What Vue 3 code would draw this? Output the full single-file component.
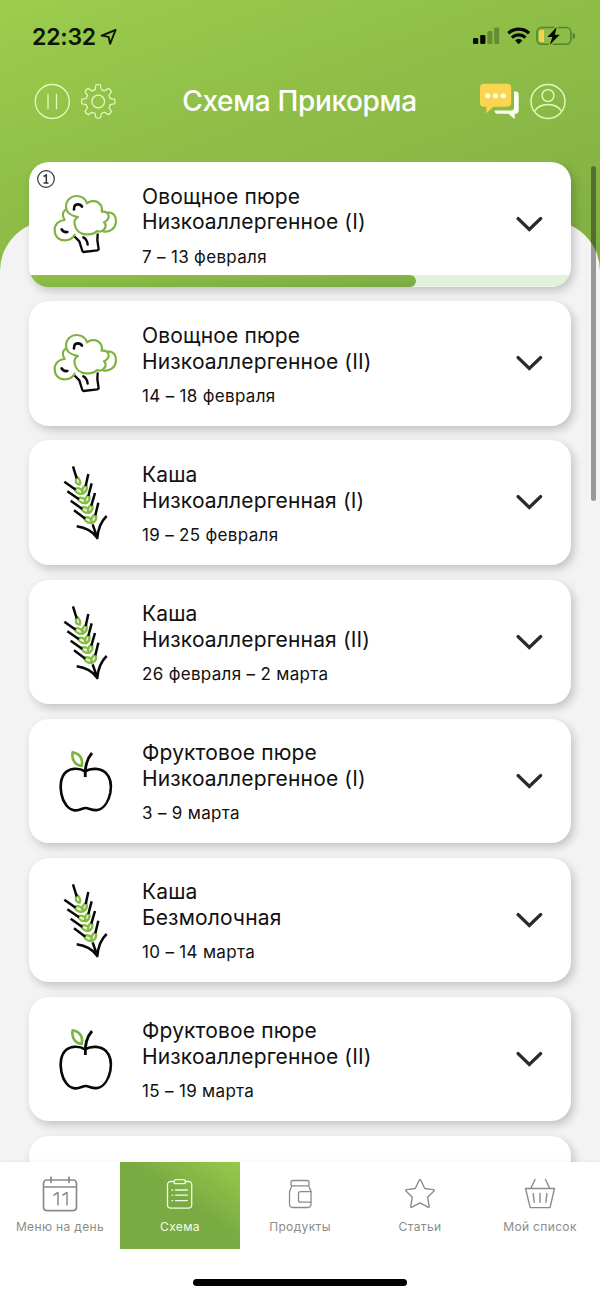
<script setup>
const cards = [
  { icon: 'broccoli', title: 'Овощное пюре', sub: 'Низкоаллергенное (I)', date: '7 – 13 февраля', progress: 71.4, info: true },
  { icon: 'broccoli', title: 'Овощное пюре', sub: 'Низкоаллергенное (II)', date: '14 – 18 февраля' },
  { icon: 'wheat', title: 'Каша', sub: 'Низкоаллергенная (I)', date: '19 – 25 февраля' },
  { icon: 'wheat', title: 'Каша', sub: 'Низкоаллергенная (II)', date: '26 февраля – 2 марта' },
  { icon: 'apple', title: 'Фруктовое пюре', sub: 'Низкоаллергенное (I)', date: '3 – 9 марта' },
  { icon: 'wheat', title: 'Каша', sub: 'Безмолочная', date: '10 – 14 марта' },
  { icon: 'apple', title: 'Фруктовое пюре', sub: 'Низкоаллергенное (II)', date: '15 – 19 марта' },
  { icon: '', title: 'Овощное пюре', sub: '', date: '' },
]
const tabs = [
  { id: 'calendar', label: 'Меню на день' },
  { id: 'plan', label: 'Схема', active: true },
  { id: 'jar', label: 'Продукты' },
  { id: 'star', label: 'Статьи' },
  { id: 'basket', label: 'Мой список' },
]
</script>

<template>
  <div class="screen">
    <div class="sheet"></div>
    <header class="head">
      <div class="status">
        <div class="clock">
          <span class="time">22:32</span>
          <svg class="loc" width="18" height="18" viewBox="0 0 18 18"><path d="M15.6 2 1.6 7.6l7 1.3 1.5 6.9z" fill="none" stroke="#0c1404" stroke-width="1.9" stroke-linejoin="round" /></svg>
        </div>
        <svg class="signals" width="104" height="22" viewBox="0 0 104 22">
          <g fill="#050a02">
            <rect x="1" y="12" width="5.2" height="6" rx="1.2" />
            <rect x="8.2" y="9" width="5.2" height="9" rx="1.2" />
            <rect x="15.4" y="5" width="5" height="13" rx="1.2" opacity=".28" />
            <rect x="22.2" y="1.5" width="5" height="16.5" rx="1.2" opacity=".28" />
          </g>
          <g fill="none" stroke="#050a02" stroke-width="3.3">
            <path d="M36.3 7.2a15.5 15.5 0 0 1 20.800 0" />
            <path d="M39.9 11.6a10 10 0 0 1 13.600 0" />
          </g>
          <path d="M43 14.5a5.600 5.600 0 0 1 7.400 0L46.700 18.300z" fill="#050a02" />
          <rect x="64.900" y="1.600" width="34" height="16.600" rx="4.600" fill="none" stroke="#55822b" stroke-width="1.500" />
          <path d="M100.600 7v6c2-.4 2.500-1.500 2.500-3s-.5-2.600-2.500-3z" fill="#55822b" />
          <path d="M67 6.500a2.500 2.500 0 0 1 2.500-2.500H72v12h-2.500a2.500 2.500 0 0 1-2.500-2.500z" fill="#f8d34a" />
          <path d="M84.800 1 75.300 11h5l-2.600 8L87.800 8.800h-5z" fill="#050a02" stroke="#90c048" stroke-width="3" paint-order="stroke" />
        </svg>
      </div>
      <div class="nav">
        <svg class="left-icons" width="84" height="38" viewBox="0 0 84 38" fill="none" stroke="#e8fac0" stroke-width="1.300">
          <circle cx="19.300" cy="19.500" r="17" />
          <path d="M15 12.500v14M23.500 12.500v14" stroke-linecap="round" />
          <circle cx="65.200" cy="19.500" r="6.300" />
          <path stroke-linejoin="round" transform="translate(65.200 19.500) scale(.93) translate(-65.200 -19.500)" d="M62.800 1.500h4.800q.6 5 1 5.200l3.300 1.400q2.500-1.700 4-2.700 2 .5 3.500 3.500-1 2.500-2.600 4l1.400 3.300q2.500.5 4.700.9 1 2.400 0 4.800l-4.700.9-1.400 3.400q1.500 2 2.600 4-.8 2.400-3.500 3.400l-4-2.600-3.300 1.400q-.5 2.600-1 4.600-2.400.8-4.800 0l-.9-4.600-3.400-1.400q-2 1.500-4 2.600-2.500-.8-3.400-3.400l2.600-4-1.400-3.400q-2.500-.5-4.600-.9-.8-2.400 0-4.800l4.600-.9 1.400-3.300q-1.500-2-2.600-4 .8-2.500 3.400-3.500l4 2.700 3.400-1.400q.5-2.500.9-5.200z" />
        </svg>
        <h1>Схема Прикорма</h1>
        <svg class="right-icons" width="92" height="38" viewBox="0 0 92 38">
          <path d="M34 9.500h1.500c2 0 3.200 1.200 3.200 3.200V28.500c0 2-1.200 3.200-3.200 3.200h-.8v5.600l-6.200-5.600H17.500c-2 0-3-1.200-3-3.200h16.500c2 0 3-1.200 3-3z" fill="#fcfff2" />
          <path d="M4 1.700h23.200a4 4 0 0 1 4 4v15a4 4 0 0 1-4 4H13.500L6.300 31.300V24.700H4a4 4 0 0 1-4-4v-15a4 4 0 0 1 4-4z" fill="#fad550" />
          <g fill="#fffbea"><circle cx="7.800" cy="13.800" r="2.600" /><circle cx="15.500" cy="13.800" r="2.600" /><circle cx="23.200" cy="13.800" r="2.600" /></g>
          <g fill="none" stroke="#e8fac0" stroke-width="1.400">
            <circle cx="68" cy="19.500" r="17" /><circle cx="68" cy="13.500" r="5.900" />
            <path d="M54.500 29.500c2.500-4.500 7.500-7 13.500-7s11 2.500 13.500 7" />
          </g>
        </svg>
      </div>
    </header>

    <main class="list">
      <article v-for="(c, i) in cards" :key="i" class="card">
        <svg class="pic" width="112" height="124" viewBox="0 0 336 372" fill="none" stroke-linecap="round" stroke-linejoin="round">
          <g v-if="c.icon === 'broccoli'" transform="translate(31 54)">
            <g stroke="#0a0a0a" stroke-width="7">
              <path d="M107 171 120 184 129 213 132 216 174 211 178 208 174 180 175 163" />
              <path d="M132 172c8 4 12 11 13 22" />
              <path d="M104 88c-1-12 6-15 12-15 6 0 10 3 12 7M67 148c3 6 9 9 17 8" stroke-width="8" />
            </g>
            <g stroke="#7fb341" stroke-width="6.500">
              <path d="M116 111C97 108 80 98 80 80 80 60 96 47 113 48 128 49 139 57 143 70 152 62 167 61 176 67 186 74 190 83 187 95 201 93 209 101 208 110 207 120 201 124 194 127 200 133 200 141 195 147 190 154 182 157 173 153 165 162 152 164 140 163 122 162 109 150 106 134 104 124 108 115 116 111z" />
              <path d="M77 90c-8 8-8 19-1 30-18 1-30 13-30 30 0 18 12 31 30 31 14 0 24-6 30-17M207 97c14 0 24 11 23 27-1 20-18 35-38 30" />
            </g>
          </g>
          <g v-else-if="c.icon === 'wheat'" transform="translate(3 1)">
            <g fill="#e9f7d0" stroke="#84bd43" stroke-width="7">
              <path d="M141 109c9 9 12 16 8 24-11-1-16-11-8-24z" />
              <path d="M133 145c13-4 23 1 27 14-13 4-23-2-27-14zM143 173c13-4 23 1 27 14-13 4-23-2-27-14zM153 202c13-4 23 1 27 14-13 4-23-2-27-14zM162 232c13-4 23 1 26 14-13 4-23-2-26-14z" />
              <path d="M169 134c4 13-1 21-10 25-5-11 0-21 10-25zM177 164c4 13-1 21-10 25-5-11 0-21 10-25zM186 193c4 13-1 21-10 25-5-11 0-21 10-25zM197 222c4 13-1 22-11 26-5-11 0-22 11-26z" />
            </g>
            <g stroke="#080808" stroke-width="7.500" stroke-linecap="butt">
              <path d="M129 78 140 114M103 124 137 148M112 153 147 177M122 181 157 206M132 210 166 235" />
              <path d="M175 101 167 137M185 129 175 167M195 158 184 196M205 187 196 225" />
              <path d="M188 252 203 296M140 258c29 4 48 15 62 35 2-26 10-49 28-66" />
            </g>
          </g>
          <g v-else-if="c.icon === 'apple'" transform="translate(3 4)">
            <path d="M165 153c-17-11-43-10-56 1-17 14-20 43-15 66 5 26 20 48 40 50 15 2 23-7 33-7s20 9 35 6c21-4 34-28 39-52 4-22 1-45-14-60-16-14-43-15-62-4" stroke="#080808" stroke-width="8" />
            <path d="M166 170c-2-31 4-54 20-72" stroke="#080808" stroke-width="8.500" stroke-linecap="butt" />
            <path d="M128 96c21 3 32 19 27 41-20-3-31-20-27-41z" stroke="#7fb341" stroke-width="8" />
          </g>
        </svg>
        <div class="text">
          <div class="name">{{ c.title }}</div>
          <div class="name">{{ c.sub }}</div>
          <div class="date">{{ c.date }}</div>
        </div>
        <svg class="chev" width="30" height="20" viewBox="0 0 30 20"><path d="M4 4.500 15.300 15.500 26.700 4.500" fill="none" stroke="#2b2b2b" stroke-width="3.200" stroke-linecap="round" /></svg>
        <svg v-if="c.info" class="info" width="20" height="20" viewBox="0 0 20 20" fill="none" stroke="#333" stroke-width="1.200"><circle cx="10" cy="10" r="8.300" /><path d="M7.500 7.500 10.300 6v8M7.500 14h5" stroke-width="1.500" /></svg>
        <div v-if="c.progress" class="track"><div class="bar" :style="{ width: c.progress + '%' }"></div></div>
      </article>
    </main>
    <div class="scroll"></div>

    <footer class="foot">
      <nav class="tabs">
        <div v-for="t in tabs" :key="t.id" class="tab" :class="{ active: t.active }">
          <svg width="40" height="40" viewBox="0 0 40 40" fill="none" stroke="currentColor" stroke-width="1.300" stroke-linecap="round" stroke-linejoin="round">
            <template v-if="t.id === 'calendar'">
              <path d="M7 5h26a3.500 3.500 0 0 1 3.500 3v24.500a3.500 3.500 0 0 1-3.500 3.200H7a3.500 3.500 0 0 1-3.500-3.200V8A3.500 3.500 0 0 1 7 5zM3.500 12h33M11 2v5.500M29 2v5.500" stroke-width="1.700" />
              <path d="m14 20 4-2.500V30M23 20l4-2.500V30" stroke-width="1.500" />
            </template>
            <template v-else-if="t.id === 'plan'">
              <path d="M14 6.500h-3.500a3 3 0 0 0-3 3v20.700a3 3 0 0 0 3 3h18.200a3 3 0 0 0 3-3V9.500a3 3 0 0 0-3-3H25.500M16 4.700h7.500c1.300 0 2 .8 2 2s-.7 2-2 2H16c-1.300 0-2-.8-2-2s.7-2 2-2z" />
              <path d="M15.500 15h11.800M15.500 20.200h11.800M15.500 25.700h11.800M12 15h.6M12 20.200h.6M12 25.700h.6" />
            </template>
            <template v-else-if="t.id === 'jar'">
              <path d="M12.500 5.500h15c1 0 1.500.5 1.500 1.300v2.700c0 .8-.5 1.300-1.500 1.300h-15c-1 0-1.500-.5-1.500-1.300V6.800c0-.8.500-1.300 1.500-1.300zM11.500 11c-.3 3-2 3.800-2 6.500V29c0 2.500 1 3.500 3.500 3.500h14.500c2.500 0 3.500-1 3.500-3.500V17.500c0-2.700-1.500-3.500-2-6.500" />
              <path d="M31 16.700H20.500c-1.300 0-2 .8-2 2v6.500c0 1.300.7 2 2 2H31" />
            </template>
            <path v-else-if="t.id === 'star'" stroke-width="1.400" d="M20 4.800c.5 0 .7.200 1 .7l3.700 8 8.700 1.100c1 .2 1.200.9.600 1.500l-6.400 6.200 1.600 9c.1.900-.5 1.300-1.300.9L20 27.800l-8 4.400c-.8.400-1.400 0-1.300-.9l1.600-9-6.300-6.200c-.6-.6-.4-1.300.6-1.500l8.700-1.100 3.700-8c.3-.5.500-.7 1-.7z" />
            <template v-else>
              <path d="M5.500 13.500h29L30 32.600H10.200zM11 13l4-8.500M29.500 13l-4-8.500M13.200 18.500l1 8.700M20 18.500v8.700M26.900 18.500l-1 8.700" stroke-width="1.400" />
            </template>
          </svg>
          <span>{{ t.label }}</span>
        </div>
      </nav>
      <div class="home"></div>
    </footer>
  </div>
</template>

<style>
body { margin: 0; }
</style>

<style scoped>
.screen { position: relative; width: 600px; height: 1297px; overflow: hidden; display: flex; flex-direction: column; background: linear-gradient(164deg, #9bcc4c 0, #9aca4b 900px, #8db946 1160px, #7bab42 1400px); background: linear-gradient(160deg, #9ccd4c 0, #90c048 170px, #86b445 370px, #7bab42 480px); font-family: Inter, "Liberation Sans", sans-serif; color: #111; box-sizing: border-box; }
.sheet { position: absolute; left: 0; right: 0; top: 221px; bottom: 0; border-radius: 50px 50px 0 0; background: #f3f3f3; }
.head { position: relative; flex: 0 0 162px; }
.status { display: flex; justify-content: space-between; height: 22px; padding: 26px 24px 0 32px; }
.clock { display: flex; align-items: center; gap: 4px; }
.time { font-size: 23px; font-weight: 600; line-height: 20px; letter-spacing: -.2px; color: #0c1404; }
.nav { display: flex; justify-content: space-between; align-items: center; padding: 34px 28px 0 33px; height: 38px; }
.left-icons { flex: none; }
.nav h1 { margin: -1px 0 0 2px; font-size: 28px; font-weight: 500; line-height: 36px; letter-spacing: -.35px; color: #fff; white-space: nowrap; }
.list { position: relative; flex: 1; min-height: 0; overflow: hidden; display: flex; flex-direction: column; gap: 14.400px; padding: 0.300px 29px 0; }
.card { position: relative; flex: 0 0 124.700px; border-radius: 20px; background: #fff; display: flex; box-shadow: 3px 4px 10px rgba(0, 0, 0, .2); }
.pic { flex: none; }
.text { flex: 1; padding: 21.700px 0 0 1px; white-space: nowrap; }
.name { font-size: 21px; line-height: 25.500px; min-height: 25.500px; letter-spacing: .15px; }
.date { margin-top: 12px; font-size: 17px; line-height: 20px; letter-spacing: .32px; }
.chev { margin: 52px 27px 0 0; }
.info { position: absolute; left: 7px; top: 7px; }
.track { position: absolute; inset: 0; border-radius: 20px; overflow: hidden; display: flex; align-items: flex-end; background: linear-gradient(#e3f0dc, #e3f0dc) bottom / 100% 11.500px no-repeat; pointer-events: none; }
.bar { height: 11.500px; border-radius: 0 6px 6px 0; background: linear-gradient(178deg, #8fc247, #78aa42); }
.scroll { position: absolute; left: 591px; top: 166px; width: 5px; height: 335px; border-radius: 3px; background: rgba(0, 0, 0, .37); }
.foot { position: relative; flex: 0 0 135.500px; background: #fff; box-shadow: 0 -1px 5px rgba(0, 0, 0, .04); display: flex; flex-direction: column; align-items: center; }
.tabs { display: grid; grid-template-columns: repeat(5, 1fr); width: 600px; height: 87px; }
.tab { display: flex; flex-direction: column; align-items: center; padding-top: 13px; color: #8b8b8b; }
.tab span { font-size: 12px; line-height: 16px; letter-spacing: .35px; margin-top: 4.500px; white-space: nowrap; }
.tab.active { color: #f2fbe3; background: linear-gradient(to top right, #7aab43 55%, #98c94b); }
.home { width: 214px; height: 7px; border-radius: 4px; background: #000; margin-top: 30.500px; }
</style>
